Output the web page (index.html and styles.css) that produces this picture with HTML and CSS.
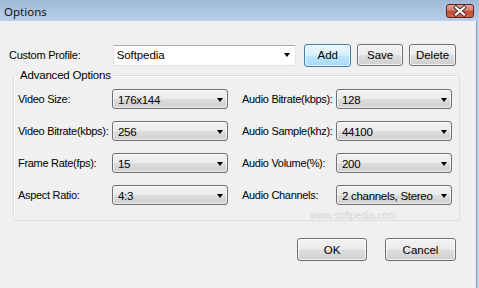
FILE: index.html
```html
<!DOCTYPE html>
<html>
<head>
<meta charset="utf-8">
<link rel="stylesheet" href="styles.css">
</head>
<body>
<div class="window">
  <div class="titlebar">
    <span class="title">Options</span>
    <span class="close">
      <svg width="28" height="14" viewBox="0 0 28 14">
        <defs>
          <linearGradient id="cg" x1="0" y1="0" x2="0" y2="1">
            <stop offset="0" stop-color="#e4a79b"/>
            <stop offset="0.45" stop-color="#d47f6e"/>
            <stop offset="0.5" stop-color="#c24a33"/>
            <stop offset="1" stop-color="#d2684f"/>
          </linearGradient>
        </defs>
        <rect x="0.5" y="0.5" width="27" height="13" rx="2.5" fill="url(#cg)" stroke="#5b2720"/>
        <path d="M10 3.5 L18 10.5 M18 3.5 L10 10.5" stroke="#4a2a26" stroke-width="4" stroke-linecap="square"/>
        <path d="M10 3.5 L18 10.5 M18 3.5 L10 10.5" stroke="#ffffff" stroke-width="2.2" stroke-linecap="square"/>
      </svg>
    </span>
  </div>
  <div class="body">
    <div class="client">
      <div class="profile-row">
        <span class="plabel">Custom Profile:</span>
        <div class="edit"><span>Softpedia</span><i class="arrow"></i></div>
        <button class="btn focus add">Add</button>
        <button class="btn save">Save</button>
        <button class="btn del">Delete</button>
      </div>
      <fieldset class="group">
        <legend>Advanced Options</legend>
        <div class="grid">
          <span class="lbl">Video Size:</span>
          <div class="combo"><span>176x144</span><i class="arrow"></i></div>
          <span class="lbl">Audio Bitrate(kbps):</span>
          <div class="combo"><span>128</span><i class="arrow"></i></div>

          <span class="lbl">Video Bitrate(kbps):</span>
          <div class="combo"><span>256</span><i class="arrow"></i></div>
          <span class="lbl">Audio Sample(khz):</span>
          <div class="combo"><span>44100</span><i class="arrow"></i></div>

          <span class="lbl">Frame Rate(fps):</span>
          <div class="combo"><span>15</span><i class="arrow"></i></div>
          <span class="lbl">Audio Volume(%):</span>
          <div class="combo"><span>200</span><i class="arrow"></i></div>

          <span class="lbl">Aspect Ratio:</span>
          <div class="combo"><span>4:3</span><i class="arrow"></i></div>
          <span class="lbl">Audio Channels:</span>
          <div class="combo"><span>2 channels, Stereo</span><i class="arrow"></i></div>
        </div>
        <span class="wm-small">www.softpedia.com</span>
      </fieldset>
      <div class="footer">
        <button class="btn ok">OK</button>
        <button class="btn cancel">Cancel</button>
      </div>
    </div>
    <div class="frame"></div>
  </div>
</div>
</body>
</html>
```

FILE: styles.css
```css
html, body {
  margin: 0;
  padding: 0;
  background: #f0f0f0;
}
.window {
  width: 479px;
  height: 288px;
  display: flex;
  flex-direction: column;
  font-family: "Liberation Sans", Arial, sans-serif;
  font-size: 11px;
  color: #000;
  overflow: hidden;
}
.titlebar {
  height: 21px;
  flex: none;
  display: flex;
  align-items: center;
  justify-content: space-between;
  padding: 0 5px 0 4px;
  background: linear-gradient(#9fb8d5, #b9d1ea);
  box-sizing: border-box;
}
.title {
  font-family: "Noto Sans", "Open Sans", sans-serif;
  font-size: 11.5px;
  color: #111;
  margin-top: 1px;
}
.close {
  display: block;
  width: 28px;
  height: 14px;
}
.close svg { display: block; }
.body {
  flex: 1;
  display: flex;
}
.client {
  width: 476px;
  background: #f0f0f0;
  box-sizing: border-box;
  padding: 23px 20px 0 9px;
}
.frame {
  flex: 1;
  border-left: 1px solid #8c9db1;
  background: #bcd2e9;
}
.profile-row {
  display: flex;
  align-items: center;
  height: 22px;
}
.plabel {
  width: 104px;
  letter-spacing: -0.25px;
}
.edit {
  width: 184px;
  height: 21px;
  box-sizing: border-box;
  border: 1px solid #e2e3ea;
  border-top-color: #abadb3;
  background: #fff;
  display: flex;
  align-items: center;
  justify-content: space-between;
  padding: 0 5px 0 3px;
  font-size: 11.5px;
}
.edit span { letter-spacing: -0.1px; }
.arrow {
  display: block;
  width: 0;
  height: 0;
  border-left: 3.5px solid transparent;
  border-right: 3.5px solid transparent;
  border-top: 4px solid #000;
}
.btn {
  font-family: "Liberation Sans", Arial, sans-serif;
  font-size: 11.5px;
  color: #000;
  height: 22px;
  padding: 0;
  box-sizing: border-box;
  border: 1px solid #707070;
  border-radius: 3px;
  background: linear-gradient(#f2f2f2 0%, #ebebeb 48%, #dddddd 52%, #cfcfcf 100%);
  box-shadow: inset 0 0 0 1px rgba(255,255,255,0.7);
}
.btn.focus {
  border-color: #3c7fb1;
  background: linear-gradient(#eaf6fd 0%, #d9f0fc 48%, #bee6fd 52%, #a7d9f5 100%);
  height: 23px;
}
.add { width: 47px; margin-left: 8px; }
.save { width: 46px; margin-left: 6px; }
.del { width: 47px; margin-left: 6px; }
.group {
  position: relative;
  margin: 3px 7px 0 4px;
  padding: 7px 7px 15px 4px;
  border: 1px solid #d5dfe5;
  border-radius: 3px;
  box-shadow: inset 1px 1px 0 #fff;
}
.group legend {
  padding: 0 2px;
  font-size: 11.5px;
  letter-spacing: -0.2px;
  line-height: 13px;
}
.grid {
  display: grid;
  grid-template-columns: 94px 130px 94px 116px;
  row-gap: 12px;
  align-items: center;
}
.lbl {
  letter-spacing: -0.3px;
  white-space: nowrap;
}
.combo {
  width: 116px;
  height: 20px;
  box-sizing: border-box;
  border: 1px solid #707070;
  border-radius: 3px;
  background: linear-gradient(#f2f2f2 0%, #ebebeb 48%, #dddddd 52%, #cfcfcf 100%);
  box-shadow: inset 0 0 0 1px rgba(255,255,255,0.6);
  display: flex;
  align-items: center;
  justify-content: space-between;
  padding: 1px 4px 0 5px;
  font-size: 11.5px;
}
.combo span { letter-spacing: -0.3px; white-space: nowrap; }
.wm-small {
  position: absolute;
  left: 296px;
  top: 128px;
  font-size: 10px;
  color: rgba(200,200,200,0.7);
  pointer-events: none;
}
.footer {
  display: flex;
  justify-content: flex-end;
  gap: 18px;
  margin-top: 17px;
}
.ok { width: 70px; height: 23px; }
.cancel { width: 71px; height: 23px; }
```
